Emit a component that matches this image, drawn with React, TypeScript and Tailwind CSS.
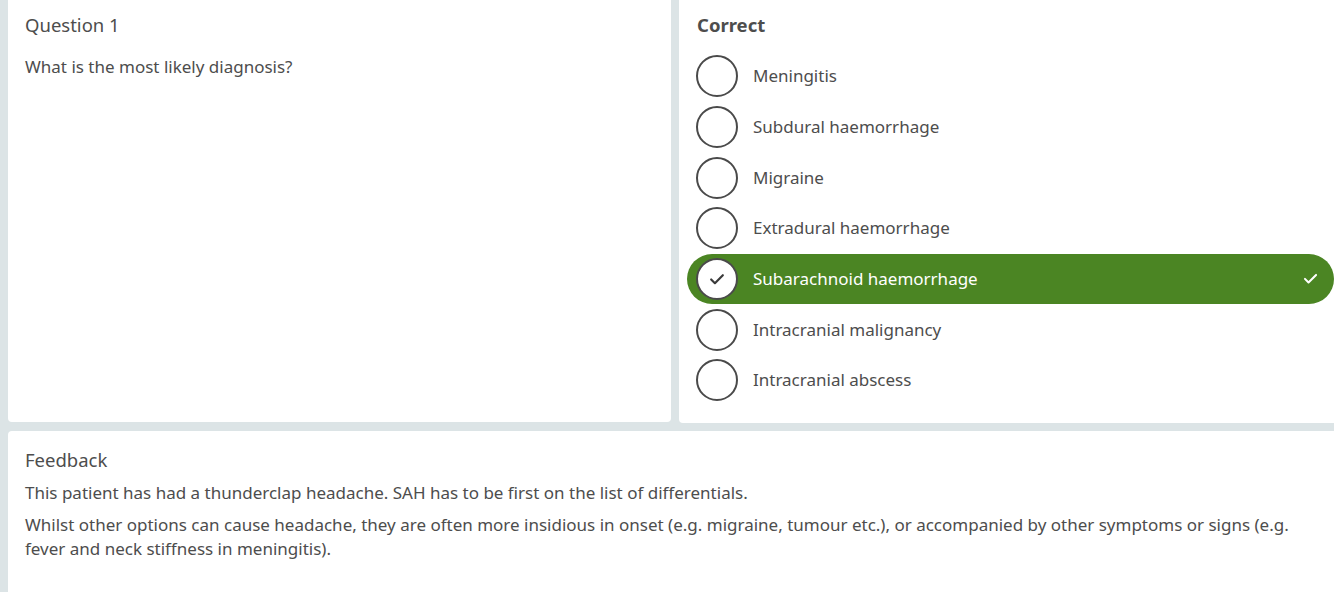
import React from "react";

const options = [
  "Meningitis",
  "Subdural haemorrhage",
  "Migraine",
  "Extradural haemorrhage",
  "Subarachnoid haemorrhage",
  "Intracranial malignancy",
  "Intracranial abscess",
];

function Check({ className }: { className?: string }) {
  return (
    <svg viewBox="0 0 24 24" className={className} fill="none" stroke="currentColor" strokeWidth="2.6" strokeLinecap="round" strokeLinejoin="round">
      <path d="M5 12.5l4.5 4.5L19 7.5" />
    </svg>
  );
}

export default function App() {
  return (
    <div
      className="h-[592px] bg-[#dce4e6] pl-2 text-[#4d4d4d] overflow-hidden"
      style={{ fontFamily: '"Noto Sans", "Open Sans", sans-serif' }}
    >
      <div className="grid grid-cols-[663px_1fr] gap-2 h-[423px]">
        <div className="bg-white rounded-b-[4px] h-[422px] px-[17px] pt-[12px]">
          <div className="text-[18.5px] leading-[26px]">Question 1</div>
          <div className="mt-[17px] text-[17px] leading-[24px]">What is the most likely diagnosis?</div>
        </div>
        <div className="bg-white rounded-bl-[4px] h-[423px] pl-2 pt-[12px]">
          <div className="pl-[10px] text-[18.5px] leading-[26px] font-bold">Correct</div>
          <div className="mt-[13px] flex flex-col">
            {options.map((o, i) => {
              const sel = i === 4;
              return (
                <div
                  key={o}
                  className={`flex items-center h-[50.67px] pl-[9px] pr-[14px] rounded-full ${sel ? "bg-[#4b8523] text-white" : ""}`}
                >
                  <div className="w-[42px] h-[42px] rounded-full border-2 border-[#4a4a4a] bg-white flex items-center justify-center shrink-0">
                    {sel && <Check className="w-[20px] h-[20px] text-[#3a3a3a]" />}
                  </div>
                  <div className="ml-[15px] text-[17px] leading-[24px] flex-1">{o}</div>
                  {sel && <Check className="w-[19px] h-[19px] text-white" />}
                </div>
              );
            })}
          </div>
        </div>
      </div>
      <div className="mt-2 bg-white rounded-tl-[4px] h-[200px] pl-[17px] pr-[8px] pt-[16px]">
        <div className="text-[18.5px] leading-[26px]">Feedback</div>
        <p className="mt-[8px] text-[17px] leading-[24px]">
          This patient has had a thunderclap headache. SAH has to be first on the list of differentials.
        </p>
        <p className="mt-[8px] text-[17px] leading-[23.5px]">
          Whilst other options can cause headache, they are often more insidious in onset (e.g. migraine, tumour etc.), or accompanied by other symptoms or signs (e.g. fever and neck stiffness in meningitis).
        </p>
      </div>
    </div>
  );
}
